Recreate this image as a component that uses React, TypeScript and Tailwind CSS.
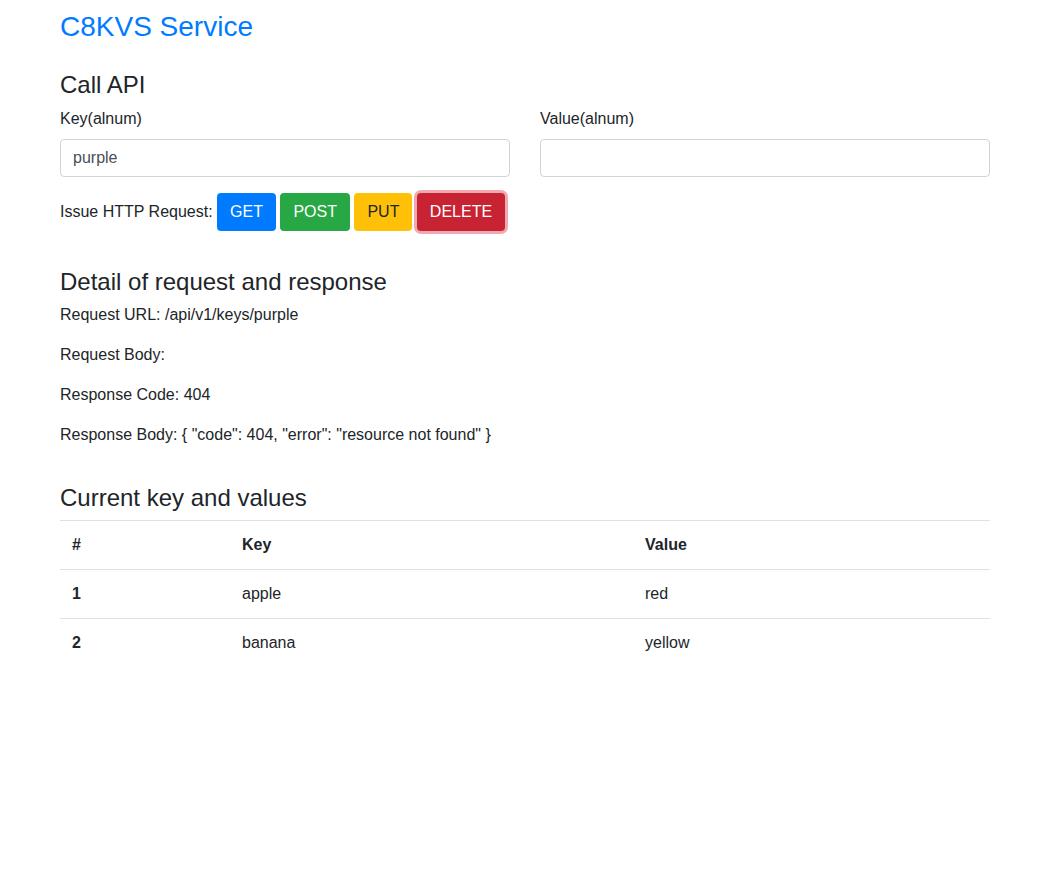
import * as React from "react"

const rows = [
  { id: 1, key: "apple", value: "red" },
  { id: 2, key: "banana", value: "yellow" },
]

const btn = "inline-block h-[38px] rounded-[4px] border border-transparent px-3 text-base leading-6 align-middle"

export default function App() {
  const [key, setKey] = React.useState("purple")
  const [value, setValue] = React.useState("")

  return (
    <div className="min-h-screen bg-white text-[#212529] font-['Liberation_Sans',Arial,sans-serif] text-base leading-6">
      <div className="mx-auto w-[960px] px-[15px] pt-[10px]">
        <h3 className="mb-2 text-[28px] font-medium leading-[1.2] text-[#007bff]">C8KVS Service</h3>

        <h4 className="mt-[27px] mb-2 text-2xl font-medium leading-[1.2]">Call API</h4>
        <div className="mb-4 grid grid-cols-2 gap-[30px]">
          <div>
            <label className="mb-2 block">Key(alnum)</label>
            <input
              value={key}
              onChange={(e) => setKey(e.target.value)}
              className="block h-[38px] w-full rounded-[4px] border border-[#ced4da] px-3 text-[#495057] outline-none"
            />
          </div>
          <div>
            <label className="mb-2 block">Value(alnum)</label>
            <input
              value={value}
              onChange={(e) => setValue(e.target.value)}
              className="block h-[38px] w-full rounded-[4px] border border-[#ced4da] px-3 text-[#495057] outline-none"
            />
          </div>
        </div>

        <div className="mb-4 flex items-center gap-[4.45px]">
          <span>Issue HTTP Request:</span>
          <button className={`${btn} bg-[#007bff] text-white`}>GET</button>
          <button className={`${btn} bg-[#28a745] text-white`}>POST</button>
          <button className={`${btn} bg-[#ffc107] text-[#212529]`}>PUT</button>
          <button className={`${btn} bg-[#c82333] text-white shadow-[0_0_0_3px_rgba(225,83,97,0.5)]`}>DELETE</button>
        </div>

        <h4 className="mt-[37px] mb-[6px] text-2xl font-medium leading-[1.2]">Detail of request and response</h4>
        <p className="mb-4">Request URL: /api/v1/keys/purple</p>
        <p className="mb-4">Request Body:</p>
        <p className="mb-4">Response Code: 404</p>
        <p className="mb-4">Response Body: {'{ "code": 404, "error": "resource not found" }'}</p>

        <h4 className="mt-[37px] mb-[7px] text-2xl font-medium leading-[1.2]">Current key and values</h4>
        <table className="w-full border-collapse text-left">
          <thead>
            <tr className="border-t border-[#dee2e6]">
              <th className="w-[170px] p-3 font-bold">#</th>
              <th className="w-[403px] p-3 font-bold">Key</th>
              <th className="p-3 font-bold">Value</th>
            </tr>
          </thead>
          <tbody>
            {rows.map((r) => (
              <tr key={r.id} className="border-t border-[#dee2e6]">
                <th className="p-3 font-bold">{r.id}</th>
                <td className="p-3">{r.key}</td>
                <td className="p-3">{r.value}</td>
              </tr>
            ))}
          </tbody>
        </table>
      </div>
    </div>
  )
}
